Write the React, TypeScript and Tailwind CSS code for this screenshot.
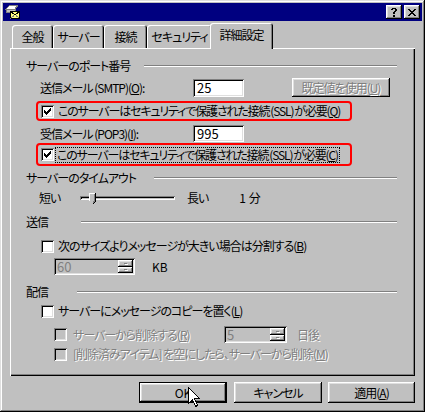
import React from "react";

const raised =
  "shadow-[inset_-1px_-1px_#000,inset_1px_1px_#fff,inset_-2px_-2px_#808080,inset_2px_2px_#dfdfdf]";
const sunken =
  "shadow-[inset_1px_1px_#808080,inset_-1px_-1px_#fff,inset_2px_2px_#000,inset_-2px_-2px_#dfdfdf]";
const etched = "text-[#808080] [text-shadow:1px_1px_0_#fff]";

// pixel glyphs for the caption buttons
const helpRows = [".XXXX.", "XX..XX", "....XX", "...XX.", "..XX..", "..XX..", "......", "..XX..", "..XX.."];
const closeRows = ["XX....XX", ".XX..XX.", "..XXXX..", "...XX...", "..XXXX..", ".XX..XX.", "XX....XX"];

function Pixels({ rows }: { rows: string[] }) {
  const w = rows[0].length;
  return (
    <svg width={w} height={rows.length} viewBox={`0 0 ${w} ${rows.length}`} shapeRendering="crispEdges">
      {rows.flatMap((r, y) =>
        r.split("").map((c, x) => (c === "X" ? <rect key={`${x}-${y}`} x={x} y={y} width="1" height="1" fill="#000" /> : null))
      )}
    </svg>
  );
}

function CheckMark() {
  const cols = [2, 3, 4, 3, 2, 1, 0];
  return (
    <svg width="7" height="7" viewBox="0 0 7 7" shapeRendering="crispEdges">
      {cols.map((y, x) => (
        <rect key={x} x={x} y={y} width="1" height="3" fill="#000" />
      ))}
    </svg>
  );
}

function Check({ checked, disabled }: { checked?: boolean; disabled?: boolean }) {
  return (
    <div
      className={`w-[13px] h-[13px] shrink-0 flex items-center justify-center ${sunken} ${
        disabled ? "bg-[#c0c0c0]" : "bg-white"
      }`}
    >
      {checked && <CheckMark />}
    </div>
  );
}

function Field({ value, className }: { value: string; className?: string }) {
  return (
    <div className={`bg-white flex items-center pl-[4px] text-[13px] tracking-normal ${sunken} ${className ?? ""}`}>
      {value}
    </div>
  );
}

function Spin({ value, className }: { value: string; className?: string }) {
  return (
    <div className={`bg-[#c0c0c0] flex items-stretch p-[2px] ${sunken} ${className ?? ""}`}>
      <div className="flex-1 flex items-center pl-[1px] text-[13px] tracking-normal text-[#808080]">{value}</div>
      <div className="w-[15px] flex flex-col">
        <div className={`flex-1 flex items-center justify-center ${raised}`}>
          <div className="w-[3px] h-px bg-[#808080] shadow-[1px_1px_#fff]" />
        </div>
        <div className={`flex-1 flex items-center justify-center ${raised}`}>
          <div className="w-[3px] h-px bg-[#808080] shadow-[1px_1px_#fff]" />
        </div>
      </div>
    </div>
  );
}

function Header({ label, line, className }: { label: string; line: string; className: string }) {
  return (
    <div className={`flex items-center justify-between h-[12px] ${className}`}>
      <span>{label}</span>
      <div className={`h-[2px] border-t border-[#808080] border-b border-b-white ${line}`} />
    </div>
  );
}

function Tab({ label, w, active }: { label: string; w: string; active?: boolean }) {
  return (
    <div
      className={`${w} flex justify-center items-center rounded-t-[3px] bg-[#c0c0c0] shadow-[inset_1px_1px_#fff,inset_-1px_0_#000,inset_-2px_0_#808080] ${
        active ? "h-[26px] -mb-px -ml-[2px] relative z-10 pb-[2px]" : "h-[23px] pt-px"
      }`}
    >
      {label}
    </div>
  );
}

function MailIcon() {
  return (
    <svg width="16" height="16" viewBox="0 0 16 16" shapeRendering="crispEdges">
      <path d="M1 5 L5 1 L13 1 L10 5 Z" fill="#fff" stroke="#808080" />
      <path d="M1 5 L10 5 L10 8 L1 8 Z" fill="#c0c0c0" stroke="#808080" />
      <rect x="5.5" y="7.5" width="9" height="7" fill="#ffff80" stroke="#000" />
      <path d="M5.5 7.5 L10 11 L14.5 7.5" fill="none" stroke="#000" />
      <path d="M5.5 14.5 L9 11.5 M14.5 14.5 L11 11.5" fill="none" stroke="#808080" />
    </svg>
  );
}

export default function App() {
  return (
    <div className="relative overflow-hidden whitespace-nowrap w-[425px] h-[412px] bg-[#c0c0c0] p-[3px] flex flex-col text-[12px] leading-none tracking-[-1px] [font-feature-settings:'palt'] text-black font-['Noto_Sans_CJK_JP','Noto_Sans_CJK_SC',sans-serif] shadow-[inset_-1px_-1px_#000,inset_1px_1px_#dfdfdf,inset_-2px_-2px_#808080,inset_2px_2px_#fff]">
      <div className="h-[18px] bg-[#000080] flex items-center pl-[2px] pr-[2px]">
        <MailIcon />
        <div className="flex-1" />
        <div className={`w-[16px] h-[14px] flex items-center justify-center bg-[#c0c0c0] ${raised}`}>
          <Pixels rows={helpRows} />
        </div>
        <div className={`ml-[2px] w-[16px] h-[14px] flex items-center justify-center bg-[#c0c0c0] ${raised}`}>
          <Pixels rows={closeRows} />
        </div>
      </div>

      <div className="flex flex-col px-[7px] pt-[2px]">
        <div className="flex items-end h-[25px] pl-[2px]">
          <Tab label="全般" w="w-[41px]" />
          <Tab label="サーバー" w="w-[51px]" />
          <Tab label="接続" w="w-[43px]" />
          <Tab label="セキュリティ" w="w-[65px]" />
          <Tab label="詳細設定" w="w-[63px]" active />
        </div>

        <div className="h-[328px] flex flex-col pl-[16px] pr-[18px] shadow-[inset_1px_1px_#fff,inset_-1px_-1px_#000,inset_-2px_-2px_#808080]">
          <Header label="サーバーのポート番号" line="w-[253px]" className="mt-[12px]" />

          <div className="mt-[6px] h-[19px] flex items-center">
            <span className="ml-[14px] w-[153px]">
              送信メール (SMTP)(<u>O</u>):
            </span>
            <Field value="25" className="w-[51px] h-[18px]" />
            <div className={`ml-[48px] w-[98px] h-[19px] flex items-center justify-center ${raised} ${etched}`}>
              既定値を使用(<u>U</u>)
            </div>
          </div>

          <div className="mt-[4px] ml-[10px] w-[316px] h-[20px] border-2 border-[#ff0000] rounded-[4px] flex items-center pl-[3px]">
            <Check checked />
            <span className="ml-[3px] px-px tracking-[-1.15px]">
              このサーバーはセキュリティで保護された接続<span className="mx-px">(SSL)</span>が必要(<u>Q</u>)
            </span>
          </div>

          <div className="mt-[4px] h-[17px] flex items-center">
            <span className="ml-[14px] w-[153px]">
              受信メール (POP3)(<u>I</u>):
            </span>
            <Field value="995" className="w-[51px] h-[17px]" />
          </div>

          <div className="mt-px ml-[10px] w-[316px] h-[23px] border-2 border-[#ff0000] rounded-[4px] flex items-center pl-[3px]">
            <Check checked />
            <span className="ml-[2px] px-px py-[1px] tracking-[-1.15px] outline-1 outline-dotted outline-black">
              このサーバーはセキュリティで保護された接続<span className="mx-px">(SSL)</span>が必要(<u>C</u>)
            </span>
          </div>

          <Header label="サーバーのタイムアウト" line="w-[243px]" className="mt-[6px]" />

          <div className="mt-[5px] h-[18px] flex items-center">
            <span className="ml-[13px] w-[41px]">短い</span>
            <div className="relative w-[95px] h-[4px] bg-[#c0c0c0] shadow-[inset_1px_1px_#808080,inset_-1px_-1px_#fff,inset_2px_2px_#000]">
              <svg
                className="absolute left-[9px] top-[-3px]"
                width="7"
                height="12"
                viewBox="0 0 7 12"
                shapeRendering="crispEdges"
              >
                <path d="M0 0 H7 V8 L3.5 11.5 L0 8 Z" fill="#c0c0c0" />
                <path d="M0.5 8 V0.5 H6" fill="none" stroke="#fff" />
                <path d="M6.5 0 V8.5 L3.5 11.5" fill="none" stroke="#000" />
                <path d="M5.5 1 V8 L3.5 10.5" fill="none" stroke="#808080" />
              </svg>
            </div>
            <span className="ml-[12px]">長い</span>
            <span className="ml-[31px] tracking-normal">1 分</span>
          </div>

          <Header label="送信" line="w-[316px]" className="mt-[9px]" />

          <div className="mt-[10px] h-[16px] flex items-center pl-[15px]">
            <Check />
            <span className="ml-[4px]">
              次のサイズよりメッセージが大きい場合は分割する(<u>B</u>)
            </span>
          </div>

          <div className="mt-[4px] h-[17px] flex items-center pl-[28px]">
            <Spin value="60" className="w-[81px] h-[17px]" />
            <span className="ml-[17px] tracking-normal">KB</span>
          </div>

          <Header label="配信" line="w-[320px]" className="mt-[11px]" />

          <div className="mt-[5px] h-[16px] flex items-center pl-[15px]">
            <Check />
            <span className="ml-[4px]">
              サーバーにメッセージのコピーを置く(<u>L</u>)
            </span>
          </div>

          <div className="mt-[7px] h-[17px] flex items-center pl-[28px]">
            <Check disabled />
            <span className={`ml-[6px] w-[151px] ${etched}`}>
              サーバーから削除する(<u>R</u>)
            </span>
            <Spin value="5" className="w-[63px] h-[17px]" />
            <span className={`ml-[10px] ${etched}`}>日後</span>
          </div>

          <div className="mt-[3px] h-[16px] flex items-center pl-[28px]">
            <Check disabled />
            <span className={`ml-[6px] ${etched}`}>
              [削除済みアイテム] を空にしたら、サーバーから削除(<u>M</u>)
            </span>
          </div>
        </div>

        <div className="mt-[6px] flex justify-end">
          <div className="w-[88px] h-[21px] border border-black">
            <div className={`w-full h-full flex items-center justify-center tracking-normal ${raised}`}>OK</div>
          </div>
          <div className={`ml-[7px] w-[88px] h-[21px] flex items-center justify-center ${raised}`}>
            キャンセル
          </div>
          <div className={`ml-[6px] w-[87px] h-[21px] flex items-center justify-center ${raised}`}>
            適用(<u>A</u>)
          </div>
        </div>
      </div>

      <svg
        className="absolute left-[188px] top-[387px]"
        width="12"
        height="20"
        viewBox="0 0 12 20"
        shapeRendering="crispEdges"
      >
        <path d="M0.5 0.5 V16.5 L4.5 12.5 L7.5 19.5 L9.5 18.5 L6.5 11.5 L11.5 11.5 Z" fill="#fff" stroke="#000" />
      </svg>
    </div>
  );
}
